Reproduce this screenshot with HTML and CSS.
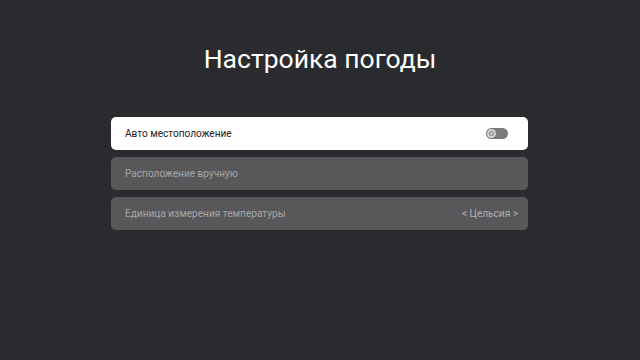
FILE: index.html
```html
<!DOCTYPE html>
<html lang="ru">
<head>
<meta charset="utf-8">
<link rel="stylesheet" href="styles.css">
</head>
<body>
<main class="page">
  <h1 class="title">Настройка погоды</h1>
  <div class="list">
    <div class="row row-active">
      <span class="label">Авто местоположение</span>
      <span class="toggle"><span class="knob"></span></span>
    </div>
    <div class="row">
      <span class="label">Расположение вручную</span>
    </div>
    <div class="row">
      <span class="label">Единица измерения температуры</span>
      <span class="value">&lt; Цельсия &gt;</span>
    </div>
  </div>
</main>
</body>
</html>
```
FILE: styles.css
```css
html, body {
  margin: 0;
  padding: 0;
  background: #2a2b2f;
  width: 640px;
  height: 360px;
  overflow: hidden;
  font-family: Roboto, "Noto Sans", sans-serif;
}
.page {
  display: flex;
  flex-direction: column;
  align-items: center;
  padding-top: 41px;
}
.title {
  margin: 0;
  font-weight: 400;
  font-size: 26.5px;
  line-height: 36px;
  color: #ffffff;
}
.list {
  margin-top: 40px;
  width: 417px;
  margin-left: -1px;
  display: flex;
  flex-direction: column;
  gap: 7px;
}
.row {
  height: 33px;
  box-sizing: border-box;
  border-radius: 5px;
  background: #58585a;
  display: flex;
  align-items: center;
  justify-content: space-between;
  padding: 0 10px 0 14px;
  font-size: 10.1px;
  color: #a6a6a6;
}
.row-active {
  background: #ffffff;
  color: #222222;
  padding-right: 20px;
}
.toggle {
  width: 22px;
  height: 11px;
  border-radius: 6px;
  background: #7a7a7a;
  display: flex;
  align-items: center;
  padding-left: 1px;
  box-sizing: border-box;
}
.knob {
  width: 9px;
  height: 9px;
  border-radius: 50%;
  background: #d4d4d4;
  box-sizing: border-box;
  border: 2px solid #d4d4d4;
  box-shadow: inset 0 0 0 1px #777;
}
.value {
  color: #b0b0b0;
}
```
